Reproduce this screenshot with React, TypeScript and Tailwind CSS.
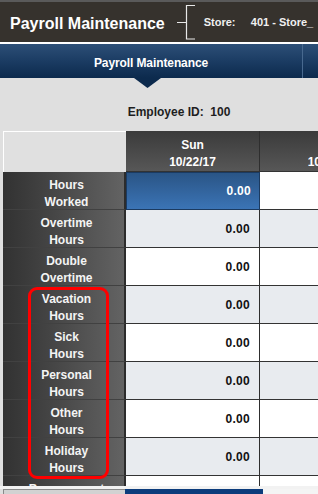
import React from "react";

const rows: { label: [string, string] }[] = [
  { label: ["Hours", "Worked"] },
  { label: ["Overtime", "Hours"] },
  { label: ["Double", "Overtime"] },
  { label: ["Vacation", "Hours"] },
  { label: ["Sick", "Hours"] },
  { label: ["Personal", "Hours"] },
  { label: ["Other", "Hours"] },
  { label: ["Holiday", "Hours"] },
  { label: ["Bereavement", "Hours"] },
];

export default function App() {
  return (
    <div className="relative w-[318px] h-[494px] overflow-hidden bg-[#dfdfdf] font-['Liberation_Sans',Arial,sans-serif]">
      {/* top header */}
      <div className="h-[2px] bg-[#5a5a5a]" />
      <div className="h-[40px] bg-[#36322d] flex items-center pl-[10px] pt-[3px] whitespace-nowrap">
        <span className="text-white font-bold text-[16px] leading-none">Payroll Maintenance</span>
        <svg className="ml-[12px] shrink-0 -mt-[3px]" width="19" height="36" viewBox="0 0 19 36">
          <path d="M0 18.5H9.5M9.5 1V35.5M9.5 1.5H18M9.5 35H18" stroke="#e8e8e8" strokeWidth="1.2" fill="none" />
        </svg>
        <span className="ml-[8px] text-[#f0f0f0] font-bold text-[11px] leading-none -mt-[2px]">
          Store:&nbsp;&nbsp;&nbsp;&nbsp; 401 - Store_
        </span>
      </div>
      <div className="h-[2px] bg-white" />
      {/* blue bar */}
      <div className="relative h-[34px] bg-gradient-to-b from-[#2d4f77] via-[#1b3c63] to-[#0c2a4d] flex">
        <div className="w-[302px] flex items-center justify-center pt-[3px]">
          <span className="text-white font-bold text-[12px] leading-none tracking-[-0.1px]">Payroll Maintenance</span>
        </div>
        <div className="w-[1px] bg-[#48698f]" />
        <svg className="absolute left-[134px] top-[34px]" width="27" height="10" viewBox="0 0 27 10">
          <path d="M0 0H27L13.5 10Z" fill="#0c2a4d" />
        </svg>
      </div>
      {/* employee id */}
      <div className="h-[53px] pt-[21px] text-center">
        <span className="text-[#1e1e1e] font-bold text-[12px] leading-[14px] pl-[40px]">
          Employee ID:&nbsp; 100
        </span>
      </div>
      {/* table */}
      <div className="ml-[3px] h-[355px] overflow-hidden">
        <div className="flex h-[41px]">
          <div className="w-[123px] shrink-0 bg-[#e0e0e0] border-t border-l border-white" />
          <div className="w-[134px] shrink-0 bg-gradient-to-b from-[#3b3b3b] to-[#575757] border-r border-[#2e2e2e] border-b border-b-[#333] flex flex-col items-center justify-center pt-[6px] text-white font-bold text-[12px] leading-[17px]">
            <span>Sun</span>
            <span>10/22/17</span>
          </div>
          <div className="w-[142px] shrink-0 bg-gradient-to-b from-[#3b3b3b] to-[#575757] border-b border-[#333] flex flex-col items-center justify-center pt-[6px] text-white font-bold text-[12px] leading-[17px]">
            <span>Mon</span>
            <span>10/23/17</span>
          </div>
        </div>
        {rows.map((r, i) => {
          const gray = i % 2 === 1;
          const selected = i === 0;
          return (
            <div key={i} className="flex h-[38px]">
              <div className="w-[123px] shrink-0 bg-gradient-to-r from-[#323232] to-[#636363] border-r-2 border-[#2c2c2c] border-b border-b-[#414141] flex flex-col items-center justify-center pl-[6px] pt-[6px] text-[#f4f4f4] font-bold text-[12px] leading-[17px]">
                <span>{r.label[0]}</span>
                <span>{r.label[1]}</span>
              </div>
              {selected ? (
                <div className="w-[134px] shrink-0 bg-gradient-to-b from-[#2a5586] to-[#3b74b6] border border-[#1b3a60] flex items-center justify-end pr-[8px] text-white font-bold text-[12px] tracking-[0.3px]">
                  0.00
                </div>
              ) : (
                <div
                  className={
                    "w-[134px] shrink-0 border-r border-[#2e2e2e] border-b border-b-[#333] flex items-center justify-end pr-[9px] text-[#111] font-bold text-[12px] tracking-[0.3px] " +
                    (gray ? "bg-[#e8ebef]" : "bg-white")
                  }
                >
                  0.00
                </div>
              )}
              <div className={"w-[142px] shrink-0 border-b border-[#333] " + (gray ? "bg-[#e8ebef]" : "bg-white")} />
            </div>
          );
        })}
      </div>
      <div className="h-[3px] bg-[#f2f2f2]" />
      <div className="flex ml-[3px] h-[5px]">
        <div className="w-[122px] bg-[#d2d2d2] border-t border-l border-[#8a8a8a]" />
        <div className="w-[138px] bg-[#0c3c7c]" />
        <div className="flex-1 bg-[#f4f4f4]" />
      </div>
      {/* red highlight */}
      <div className="absolute left-[28px] top-[287px] w-[81px] h-[192px] border-[3px] border-[#ff0000] rounded-[9px]" />
    </div>
  );
}
